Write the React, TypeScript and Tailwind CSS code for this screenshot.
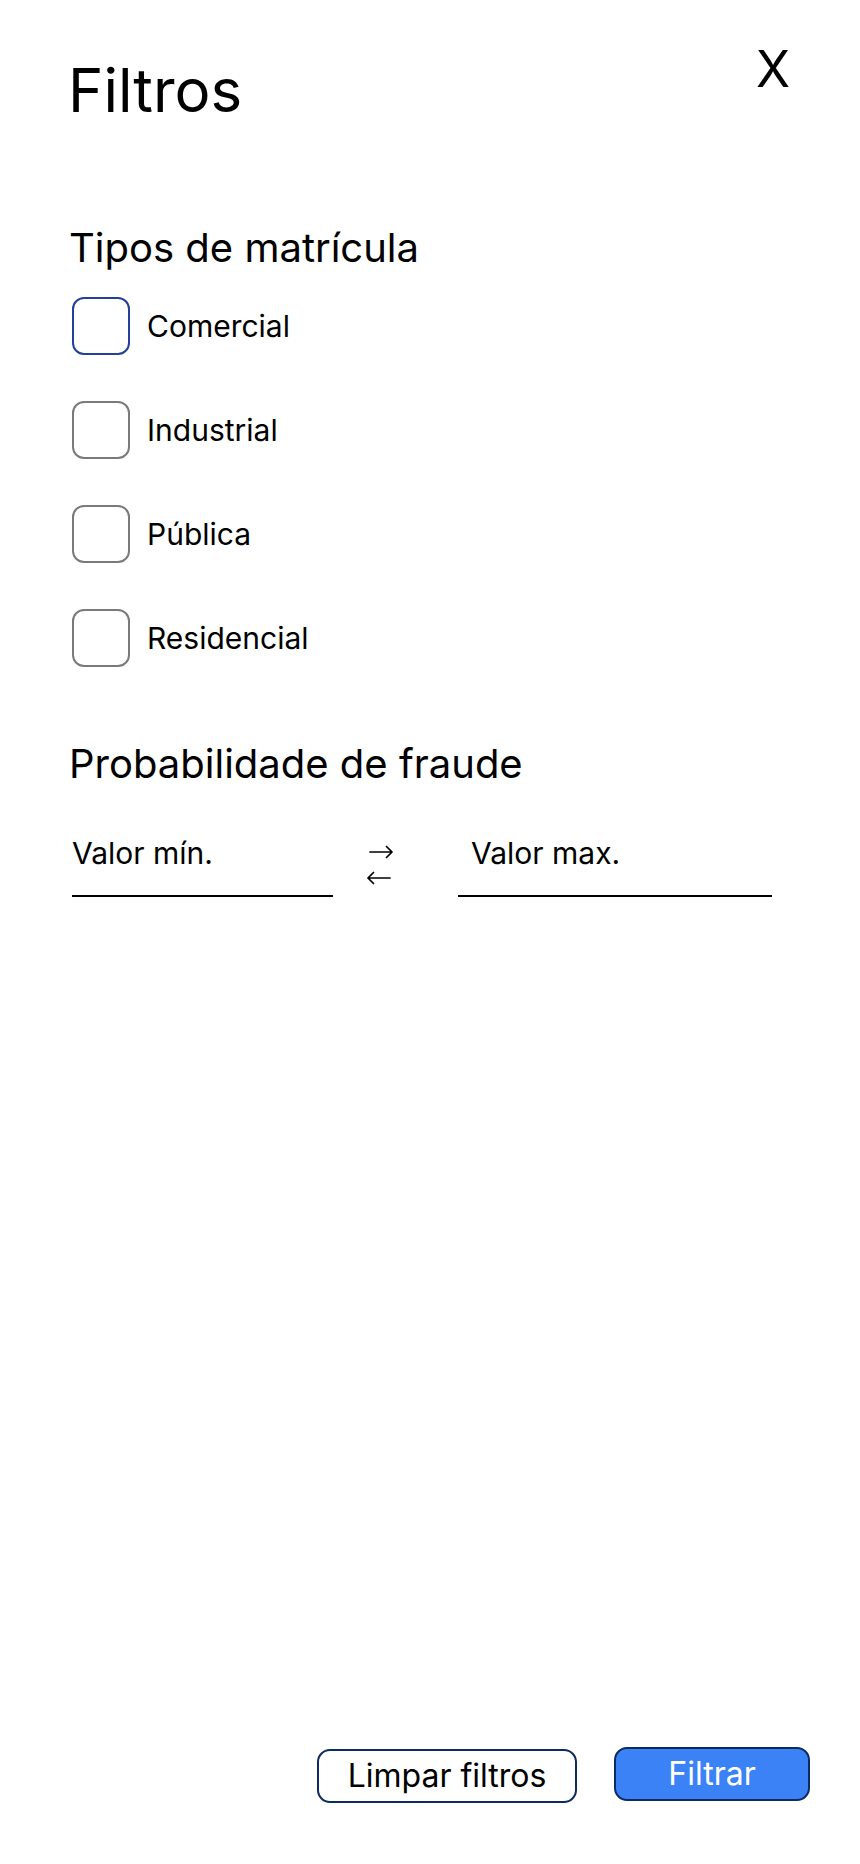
import React from "react";

const options = ["Comercial", "Industrial", "Pública", "Residencial"];

function Arrows() {
  return (
    <svg width="34" height="44" viewBox="0 0 34 44" fill="none" stroke="#000" strokeWidth="1.7" strokeLinecap="round" strokeLinejoin="round">
      <path d="M5 9 H27 M21.5 3.5 L27 9 L21.5 14.5" />
      <path d="M25 35 H3 M8.5 29.5 L3 35 L8.5 40.5" />
    </svg>
  );
}

export default function App() {
  return (
    <div
      className="w-[860px] min-h-[1864px] bg-white flex flex-col pl-[72px] pr-[50px] text-black"
      style={{ fontFamily: "Inter, 'Noto Sans', sans-serif" }}
    >
      <header className="flex justify-between items-start pt-[43px] mr-[20px]">
        <h1 className="mt-[11px] text-[60px] leading-[72px] font-normal ml-[-4px]">Filtros</h1>
        <button className="mt-[1px] text-[50px] leading-[50px] font-normal">X</button>
      </header>

      <h2 className="mt-[98px] text-[40px] leading-[48px] font-normal ml-[-3px]">Tipos de matrícula</h2>

      <div className="mt-[25px] flex flex-col gap-[46px]">
        {options.map((o, i) => (
          <label key={o} className="flex items-center gap-[17px]">
            <span
              className={
                i === 0
                  ? "w-[58px] h-[58px] rounded-[12px] border-2 border-[#24409a]"
                  : "w-[58px] h-[58px] rounded-[12px] border-2 border-[#7a7a7a]"
              }
            />
            <span className="text-[30px] leading-[36px]">{o}</span>
          </label>
        ))}
      </div>

      <h2 className="mt-[73px] text-[40px] leading-[48px] font-normal ml-[-3px]">Probabilidade de fraude</h2>

      <div className="mt-[47px] flex items-start">
        <div className="w-[261px] border-b-2 border-black pb-[24px] text-[30px] leading-[36px]">Valor mín.</div>
        <div className="w-[125px] flex justify-center mt-[8px] ml-[-14px] mr-[14px]">
          <Arrows />
        </div>
        <div className="w-[314px] border-b-2 border-black pb-[24px] pl-[13px] text-[30px] leading-[36px]">Valor max.</div>
      </div>

      <div className="flex-1" />

      <div className="flex justify-end items-start gap-[37px] pb-[61px]">
        <button className="mt-[2px] w-[260px] h-[54px] rounded-[13px] border-2 border-[#0d2b5e] bg-white text-[32px] leading-[38px] text-black">
          Limpar filtros
        </button>
        <button className="w-[196px] h-[54px] rounded-[13px] border-2 border-[#0d2b5e] bg-[#3b82f6] text-[32px] leading-[38px] text-white">
          Filtrar
        </button>
      </div>
    </div>
  );
}
